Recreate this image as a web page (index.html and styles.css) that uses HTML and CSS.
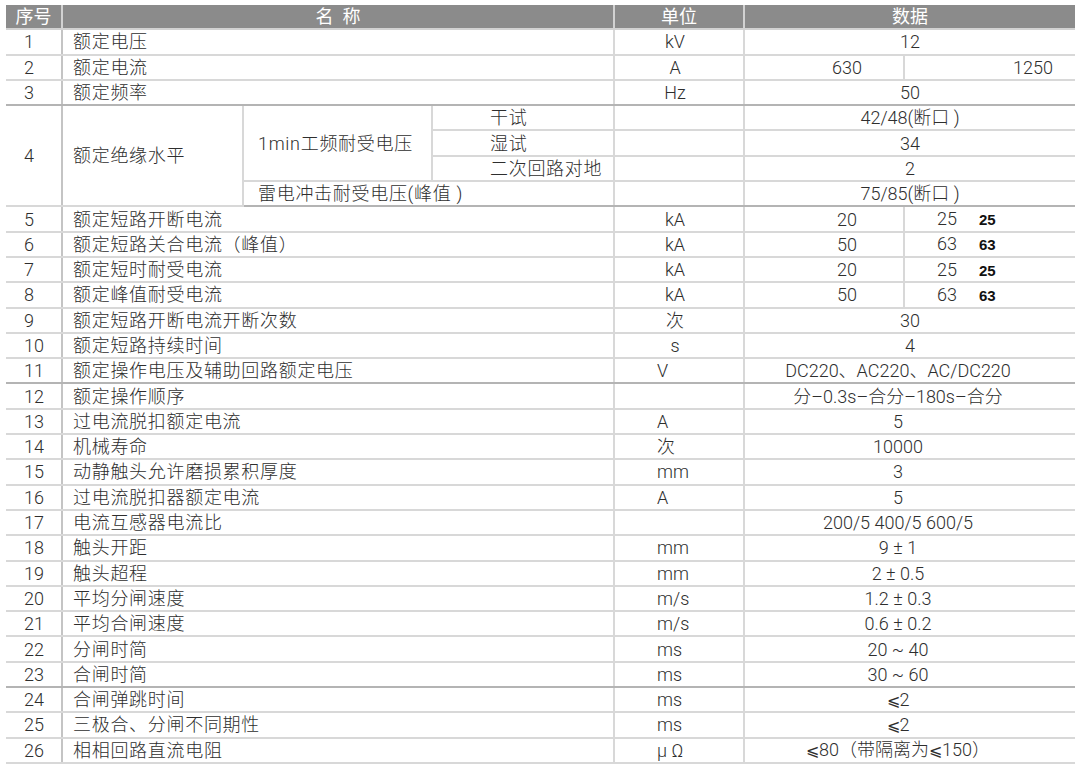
FILE: index.html
```html
<!DOCTYPE html>
<html lang="zh-CN">
<head>
<meta charset="utf-8">
<title>技术参数</title>
<link rel="stylesheet" href="styles.css">
</head>
<body>
<div class="wrap">
<table class="spec">
  <colgroup>
    <col class="c-num"><col class="c-n1"><col class="c-n2"><col class="c-n3"><col class="c-unit"><col class="c-d1"><col class="c-d2">
  </colgroup>
  <thead>
    <tr>
      <th class="h-num">序号</th>
      <th colspan="3">名&nbsp;&nbsp;称</th>
      <th>单位</th>
      <th colspan="2">数据</th>
    </tr>
  </thead>
  <tbody>
    <tr><td class="num">1</td><td class="name" colspan="3">额定电压</td><td class="unit">kV</td><td class="data" colspan="2">12</td></tr>
    <tr><td class="num">2</td><td class="name" colspan="3">额定电流</td><td class="unit">A</td><td class="d-left">630</td><td class="d-right-r">1250</td></tr>
    <tr class="sep"><td class="num">3</td><td class="name" colspan="3">额定频率</td><td class="unit">Hz</td><td class="data" colspan="2">50</td></tr>
    <tr><td class="num" rowspan="4">4</td><td class="name" rowspan="4">额定绝缘水平</td><td class="mid" rowspan="3">1min工频耐受电压</td><td class="sub">干试</td><td class="unit"></td><td class="data" colspan="2">42/48(断口 )</td></tr>
    <tr><td class="sub">湿试</td><td class="unit"></td><td class="data" colspan="2">34</td></tr>
    <tr><td class="sub">二次回路对地</td><td class="unit"></td><td class="data" colspan="2">2</td></tr>
    <tr class="sep"><td class="mid" colspan="2">雷电冲击耐受电压(峰值 )</td><td class="unit"></td><td class="data" colspan="2">75/85(断口 )</td></tr>
    <tr><td class="num">5</td><td class="name" colspan="3">额定短路开断电流</td><td class="unit">kA</td><td class="d-left">20</td><td class="d-right">25<b class="alt">25</b></td></tr>
    <tr><td class="num">6</td><td class="name" colspan="3">额定短路关合电流（峰值）</td><td class="unit">kA</td><td class="d-left">50</td><td class="d-right">63<b class="alt">63</b></td></tr>
    <tr><td class="num">7</td><td class="name" colspan="3">额定短时耐受电流</td><td class="unit">kA</td><td class="d-left">20</td><td class="d-right">25<b class="alt">25</b></td></tr>
    <tr><td class="num">8</td><td class="name" colspan="3">额定峰值耐受电流</td><td class="unit">kA</td><td class="d-left">50</td><td class="d-right">63<b class="alt">63</b></td></tr>
    <tr><td class="num">9</td><td class="name" colspan="3">额定短路开断电流开断次数</td><td class="unit">次</td><td class="data" colspan="2">30</td></tr>
    <tr><td class="num">10</td><td class="name" colspan="3">额定短路持续时间</td><td class="unit">s</td><td class="data" colspan="2">4</td></tr>
    <tr class="sep low"><td class="num">11</td><td class="name" colspan="3">额定操作电压及辅助回路额定电压</td><td class="unit">V</td><td class="data" colspan="2">DC220、AC220、AC/DC220</td></tr>
    <tr class="low"><td class="num">12</td><td class="name" colspan="3">额定操作顺序</td><td class="unit"></td><td class="data" colspan="2">分–0.3s–合分–180s–合分</td></tr>
    <tr class="low"><td class="num">13</td><td class="name" colspan="3">过电流脱扣额定电流</td><td class="unit">A</td><td class="data" colspan="2">5</td></tr>
    <tr class="low"><td class="num">14</td><td class="name" colspan="3">机械寿命</td><td class="unit">次</td><td class="data" colspan="2">10000</td></tr>
    <tr class="low"><td class="num">15</td><td class="name" colspan="3">动静触头允许磨损累积厚度</td><td class="unit">mm</td><td class="data" colspan="2">3</td></tr>
    <tr class="low"><td class="num">16</td><td class="name" colspan="3">过电流脱扣器额定电流</td><td class="unit">A</td><td class="data" colspan="2">5</td></tr>
    <tr class="low"><td class="num">17</td><td class="name" colspan="3">电流互感器电流比</td><td class="unit"></td><td class="data" colspan="2">200/5 400/5 600/5</td></tr>
    <tr class="low"><td class="num">18</td><td class="name" colspan="3">触头开距</td><td class="unit">mm</td><td class="data" colspan="2">9 ± 1</td></tr>
    <tr class="low"><td class="num">19</td><td class="name" colspan="3">触头超程</td><td class="unit">mm</td><td class="data" colspan="2">2 ± 0.5</td></tr>
    <tr class="low"><td class="num">20</td><td class="name" colspan="3">平均分闸速度</td><td class="unit">m/s</td><td class="data" colspan="2">1.2 ± 0.3</td></tr>
    <tr class="low"><td class="num">21</td><td class="name" colspan="3">平均合闸速度</td><td class="unit">m/s</td><td class="data" colspan="2">0.6 ± 0.2</td></tr>
    <tr class="low"><td class="num">22</td><td class="name" colspan="3">分闸时简</td><td class="unit">ms</td><td class="data" colspan="2">20 ~ 40</td></tr>
    <tr class="sep low"><td class="num">23</td><td class="name" colspan="3">合闸时简</td><td class="unit">ms</td><td class="data" colspan="2">30 ~ 60</td></tr>
    <tr class="low"><td class="num">24</td><td class="name" colspan="3">合闸弹跳时间</td><td class="unit">ms</td><td class="data" colspan="2"><span class="le">⩽</span>2</td></tr>
    <tr class="low"><td class="num">25</td><td class="name" colspan="3">三极合、分闸不同期性</td><td class="unit">ms</td><td class="data" colspan="2"><span class="le">⩽</span>2</td></tr>
    <tr class="low last"><td class="num">26</td><td class="name" colspan="3">相相回路直流电阻</td><td class="unit">μ Ω</td><td class="data" colspan="2"><span class="le">⩽</span>80（带隔离为<span class="le">⩽</span>150）</td></tr>
  </tbody>
</table>
</div>
</body>
</html>
```
FILE: styles.css
```css
html, body {
  margin: 0;
  padding: 0;
  background: #ffffff;
}

body {
  font-family: "Roboto", "Noto Sans CJK SC", sans-serif;
  font-size: 18px;
  font-weight: 300;
  color: #2e2e2e;
}

.wrap {
  padding: 5px 5px 0 6px;
}

.spec {
  border-collapse: collapse;
  table-layout: fixed;
  width: 1069px;
}

.c-num { width: 56px; }
.c-n1 { width: 181px; }
.c-n2 { width: 189px; }
.c-n3 { width: 182px; }
.c-unit { width: 130px; }
.c-d1 { width: 160px; }
.c-d2 { width: 171px; }

.spec th,
.spec td {
  height: 23.3px;
  padding: 0;
  line-height: 21px;
  white-space: nowrap;
  overflow: visible;
  border: 2px solid #d8d8d8;
  font-weight: 300;
}

.spec th {
  background: #8b8b8b;
  color: #ffffff;
  font-weight: 400;
  text-align: center;
  border-color: #d2d2d2;
  border-top: 0;
  font-size: 18px;
}

.spec th:first-child { border-left: 0; }
.spec th:last-child { border-right: 0; }

.spec td.num {
  text-align: left;
  padding-left: 18px;
  border-left: 0;
  border-right-color: #c4c4c4;
}

.spec td.name {
  text-align: left;
  padding-left: 10px;
  letter-spacing: 0.7px;
}

.spec td.mid {
  text-align: left;
  padding-left: 14px;
  letter-spacing: 0.7px;
}

.spec td.sub {
  text-align: left;
  padding-left: 57px;
  letter-spacing: 0.7px;
}

.spec td.unit {
  text-align: center;
  padding-right: 8px;
}

.spec tr.low td.unit {
  text-align: left;
  padding-left: 42px;
  padding-right: 0;
}

.spec td.data {
  text-align: center;
  border-right: 0;
  border-left-color: #c8c8c8;
}

.spec tr.low td.data {
  padding-right: 24px;
}

.spec td.d-left {
  text-align: center;
  padding-left: 46px;
  border-left-color: #c8c8c8;
}

.spec td.d-right {
  text-align: left;
  padding-left: 32px;
  border-right: 0;
}

.spec td.d-right-r {
  text-align: right;
  padding-right: 22px;
  border-right: 0;
}

.alt {
  font-family: "Liberation Sans", sans-serif;
  font-weight: 700;
  font-size: 15px;
  color: #111111;
  margin-left: 22px;
}

.le {
  font-family: "DejaVu Sans", sans-serif;
  font-weight: 300;
  font-size: 16px;
}

.spec tr.sep td {
  border-bottom-color: #b4b4b4;
}
```
